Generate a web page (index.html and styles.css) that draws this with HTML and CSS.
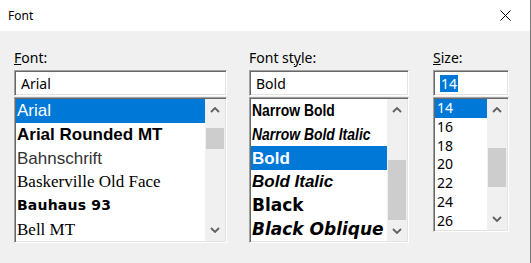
FILE: index.html
```html
<!DOCTYPE html>
<html lang="en">
<head>
  <meta charset="UTF-8">
  <title>Font</title>
  <link rel="stylesheet" href="styles.css">
</head>
<body>
  <div class="ventana">
    <div class="titulo">
      <span>Font</span>
      <svg class="cerrar" width="11" height="11" viewBox="0 0 11 11">
        <path d="M0.5 0.5 L10.5 10.5 M10.5 0.5 L0.5 10.5" stroke="#000" stroke-width="1" fill="none"/>
      </svg>
    </div>

    <div class="contenido">
      <!-- Fuente -->
      <div class="columna col-fuente">
        <label><u>F</u>ont:</label>
        <div class="caja">Arial</div>
        <div class="lista lista-alta">
          <ul class="items">
            <li class="f-arial sel">Arial</li>
            <li class="f-rounded">Arial Rounded MT</li>
            <li class="f-bahn">Bahnschrift</li>
            <li class="f-bask">Baskerville Old Face</li>
            <li class="f-bauhaus">Bauhaus 93</li>
            <li class="f-bell">Bell MT</li>
          </ul>
          <div class="scroll">
            <div class="flecha">
              <svg width="10" height="6" viewBox="0 0 10 6"><polyline points="1,5 5,1 9,5" fill="none" stroke="#606060" stroke-width="1.8"/></svg>
            </div>
            <div class="pista"><div class="pulgar pulgar-fuente"></div></div>
            <div class="flecha">
              <svg width="10" height="6" viewBox="0 0 10 6"><polyline points="1,1 5,5 9,1" fill="none" stroke="#606060" stroke-width="1.8"/></svg>
            </div>
          </div>
        </div>
      </div>

      <!-- Estilo -->
      <div class="columna col-estilo">
        <label>Font st<u>y</u>le:</label>
        <div class="caja">Bold</div>
        <div class="lista lista-alta">
          <ul class="items">
            <li class="s-narrow"><span>Narrow Bold</span></li>
            <li class="s-narrow-it"><span>Narrow Bold Italic</span></li>
            <li class="s-bold sel">Bold</li>
            <li class="s-bold-it">Bold Italic</li>
            <li class="s-black">Black</li>
            <li class="s-black-it">Black Oblique</li>
          </ul>
          <div class="scroll">
            <div class="flecha">
              <svg width="10" height="6" viewBox="0 0 10 6"><polyline points="1,5 5,1 9,5" fill="none" stroke="#606060" stroke-width="1.8"/></svg>
            </div>
            <div class="pista"><div class="pulgar pulgar-estilo"></div></div>
            <div class="flecha">
              <svg width="10" height="6" viewBox="0 0 10 6"><polyline points="1,1 5,5 9,1" fill="none" stroke="#606060" stroke-width="1.8"/></svg>
            </div>
          </div>
        </div>
      </div>

      <!-- Tamaño -->
      <div class="columna col-tam">
        <label><u>S</u>ize:</label>
        <div class="caja"><span class="marcado">14</span></div>
        <div class="lista lista-baja">
          <ul class="items items-tam">
            <li class="sel">14</li>
            <li>16</li>
            <li>18</li>
            <li>20</li>
            <li>22</li>
            <li>24</li>
            <li>26</li>
          </ul>
          <div class="scroll">
            <div class="flecha">
              <svg width="10" height="6" viewBox="0 0 10 6"><polyline points="1,5 5,1 9,5" fill="none" stroke="#606060" stroke-width="1.8"/></svg>
            </div>
            <div class="pista"><div class="pulgar pulgar-tam"></div></div>
            <div class="flecha">
              <svg width="10" height="6" viewBox="0 0 10 6"><polyline points="1,1 5,5 9,1" fill="none" stroke="#606060" stroke-width="1.8"/></svg>
            </div>
          </div>
        </div>
      </div>
    </div>
  </div>
</body>
</html>
```

FILE: styles.css
```css
* {
  box-sizing: border-box;
}

body {
  margin: 0;
  font-family: "Noto Sans", "Open Sans", sans-serif;
  background: #f0f0f0;
  color: #000;
}

.ventana {
  width: 531px;
  height: 263px;
  background: #f0f0f0;
  border-right: 1px solid #777;
}

.titulo {
  height: 31px;
  background: #fff;
  display: flex;
  align-items: center;
  justify-content: space-between;
  padding: 0 19px 0 8px;
  font-size: 12px;
}

.contenido {
  display: flex;
  padding: 17px 0 0 14px;
}

.col-fuente {
  width: 213px;
  margin-right: 22px;
}

.col-estilo {
  width: 160px;
  margin-right: 24px;
}

.col-tam {
  width: 76px;
}

label {
  display: block;
  font-size: 14px;
  line-height: 19px;
  margin-bottom: 3px;
}

.caja,
.lista {
  border: 1px solid;
  border-color: #a0a0a0 #fff #fff #a0a0a0;
  padding: 1px;
  box-shadow: inset 1px 1px 0 #696969, inset -1px -1px 0 #e3e3e3;
  background: #fff;
}

.caja {
  height: 26px;
  margin-bottom: 1px;
  padding-left: 6px;
  font-size: 14px;
  line-height: 23px;
}

.marcado {
  display: inline-block;
  background: #0078d7;
  color: #fff;
  line-height: 17px;
  padding: 0 1px;
}

.lista {
  display: flex;
}

.lista-alta {
  height: 146px;
}

.lista-baja {
  height: 135px;
}

.items {
  flex: 1;
  list-style: none;
  margin: 0;
  padding: 0;
  display: grid;
  grid-template-rows: repeat(6, 1fr);
  overflow: hidden;
}

.items-tam {
  grid-template-rows: repeat(7, 1fr);
}

.items li {
  display: flex;
  align-items: center;
  padding-left: 1px;
  white-space: nowrap;
  font-size: 17px;
  line-height: 1;
}

.items-tam li {
  font-size: 14px;
  padding-left: 2px;
}

.items li.sel {
  background: #0078d7;
  color: #fff;
}

/* fuentes de la lista */
.f-arial {
  font-family: "Liberation Sans", Arial, sans-serif;
}

.f-rounded {
  font-family: "Liberation Sans", Arial, sans-serif;
  font-weight: bold;
}

.f-bahn {
  font-family: "Liberation Sans", Arial, sans-serif;
  color: #333;
}

.f-bask,
.f-bell {
  font-family: "Liberation Serif", serif;
}

.items li.f-bauhaus {
  font-family: "DejaVu Sans", sans-serif;
  font-weight: bold;
  font-size: 14px;
  letter-spacing: 0.2px;
}

/* estilos de la lista */
.s-narrow,
.s-narrow-it {
  font-family: "Liberation Sans", Arial, sans-serif;
  font-weight: bold;
}

.s-narrow-it {
  font-style: italic;
}

.s-narrow span,
.s-narrow-it span {
  display: inline-block;
  transform: scaleX(0.82);
  transform-origin: left center;
}

.s-bold {
  font-family: "Liberation Sans", Arial, sans-serif;
  font-weight: bold;
}

.s-bold-it {
  font-family: "Liberation Sans", Arial, sans-serif;
  font-weight: bold;
  font-style: italic;
}

.s-black {
  font-family: "DejaVu Sans", sans-serif;
  font-weight: bold;
}

.s-black-it {
  font-family: "DejaVu Sans", sans-serif;
  font-weight: bold;
  font-style: oblique;
}

/* barra de desplazamiento */
.scroll {
  width: 20px;
  background: #f0f0f0;
  display: flex;
  flex-direction: column;
}

.flecha {
  height: 22px;
  display: flex;
  align-items: center;
  justify-content: center;
}

.pista {
  flex: 1;
}

.pulgar {
  background: #cdcdcd;
  margin: 0 1px;
}

.pulgar-fuente {
  margin-top: 7px;
  height: 21px;
}

.pulgar-estilo {
  margin-top: 40px;
  height: 60px;
}

.pulgar-tam {
  margin-top: 27px;
  height: 39px;
}
```
